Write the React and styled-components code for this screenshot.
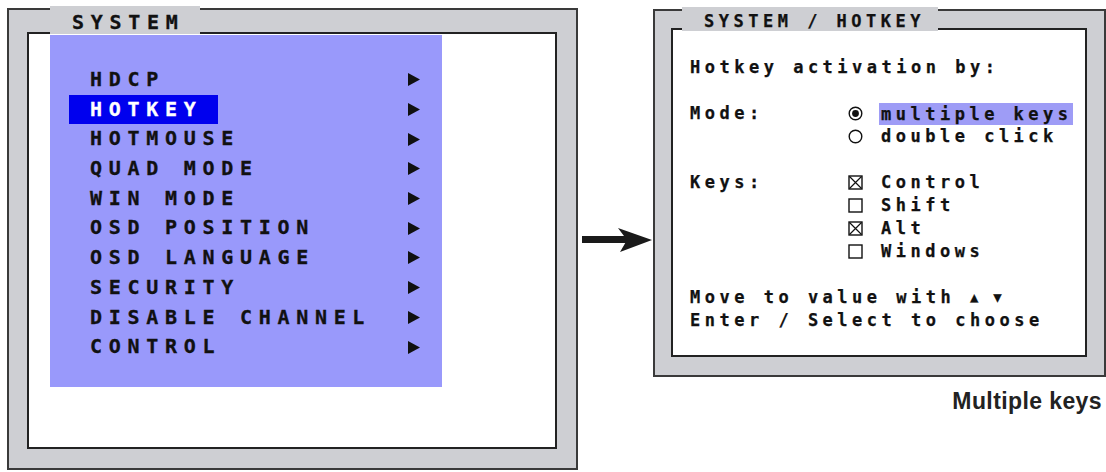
import React from "react";
import styled, { createGlobalStyle } from "styled-components";

const GlobalStyle = createGlobalStyle`
  html, body {
    margin: 0;
    padding: 0;
    background: #ffffff;
    overflow: hidden;
  }
`;

const menuItems = [
  "HDCP",
  "HOTKEY",
  "HOTMOUSE",
  "QUAD MODE",
  "WIN MODE",
  "OSD POSITION",
  "OSD LANGUAGE",
  "SECURITY",
  "DISABLE CHANNEL",
  "CONTROL",
];

const keys = [
  { name: "Control", checked: true },
  { name: "Shift", checked: false },
  { name: "Alt", checked: true },
  { name: "Windows", checked: false },
];

const RadioIcon = ({ on }) => (
  <svg width="15" height="15" viewBox="0 0 15 15">
    <circle cx="7.5" cy="7.5" r="6.3" fill="none" stroke="#111" strokeWidth="1.4" />
    {on && <circle cx="7.5" cy="7.5" r="3.4" fill="#111" />}
  </svg>
);

const CheckIcon = ({ on }) => (
  <svg width="15" height="15" viewBox="0 0 15 15">
    <rect x="1" y="1" width="13" height="13" fill="none" stroke="#111" strokeWidth="1.4" />
    {on && (
      <path d="M1.5 1.5 L13.5 13.5 M13.5 1.5 L1.5 13.5" stroke="#111" strokeWidth="1.2" />
    )}
  </svg>
);

const MenuArrow = () => (
  <svg width="12" height="13" viewBox="0 0 12 13">
    <polygon points="0,0 12,6.5 0,13" fill="#111" />
  </svg>
);

const BigArrow = () => (
  <svg width="70" height="24" viewBox="0 0 70 24">
    <rect x="0" y="8" width="47" height="7" fill="#1a1a1a" />
    <polygon points="36,0 70,12 38,24 45,12" fill="#1a1a1a" />
  </svg>
);

const App = () => {
  return (
    <>
      <GlobalStyle />
      <Page>
        <Frame $w={571} $h={462} $pad="22px 19px 19px 18px">
          <Tab $left={41} $width={150} $height={28} $padLeft={22}>
            <BigTitle>SYSTEM</BigTitle>
          </Tab>
          <Screen $pad="1px 0 0 21px">
            <Menu>
              {menuItems.map((item) => (
                <MenuRow key={item}>
                  <MenuLabel $active={item === "HOTKEY"}>{item}</MenuLabel>
                  <MenuArrow />
                </MenuRow>
              ))}
            </Menu>
          </Screen>
        </Frame>

        <ArrowSlot>
          <BigArrow />
        </ArrowSlot>

        <RightColumn>
          <Frame $w={453} $h={368} $pad="17px 17px 18px 16px">
            <Tab $left={27} $width={256} $height={24} $padLeft={22}>
              <SmallTitle>SYSTEM / HOTKEY</SmallTitle>
            </Tab>
            <Screen $pad="26px 0 0 17px">
              <Dialog>
                <Line>Hotkey activation by:</Line>

                <Group>
                  <Line>Mode:</Line>
                  <Options>
                    <Option>
                      <RadioIcon on />
                      <Picked>multiple keys</Picked>
                    </Option>
                    <Option>
                      <RadioIcon />
                      <span>double click</span>
                    </Option>
                  </Options>
                </Group>

                <Group>
                  <Line>Keys:</Line>
                  <Options>
                    {keys.map((k) => (
                      <Option key={k.name}>
                        <CheckIcon on={k.checked} />
                        <span>{k.name}</span>
                      </Option>
                    ))}
                  </Options>
                </Group>

                <div>
                  <Line>
                    Move to value with <Tri>▲</Tri> <Tri>▼</Tri>
                  </Line>
                  <Line>Enter / Select to choose</Line>
                </div>
              </Dialog>
            </Screen>
          </Frame>
          <Caption>Multiple keys</Caption>
        </RightColumn>
      </Page>
    </>
  );
};

const Page = styled.div`
  display: flex;
  align-items: stretch;
  padding: 8px 0 0 7px;
  width: 1106px;
  height: 472px;
  box-sizing: border-box;
`;

const Frame = styled.div`
  position: relative;
  flex: none;
  display: flex;
  width: ${(p) => p.$w}px;
  height: ${(p) => p.$h}px;
  box-sizing: border-box;
  padding: ${(p) => p.$pad};
  background: #cecfd3;
  border: 2px solid #3a3a3a;
`;

const Tab = styled.div`
  position: absolute;
  top: -4px;
  left: ${(p) => p.$left}px;
  width: ${(p) => p.$width}px;
  height: ${(p) => p.$height}px;
  box-sizing: border-box;
  padding-left: ${(p) => p.$padLeft}px;
  background: #cecfd3;
`;

const mono = `"DejaVu Sans Mono", "Liberation Mono", monospace`;

const BigTitle = styled.div`
  font-family: ${mono};
  font-weight: bold;
  font-size: 20px;
  letter-spacing: 6.7px;
  line-height: 25px;
  padding-top: 4px;
  color: #111;
  -webkit-text-stroke: 0.3px #111;
`;

const SmallTitle = styled.div`
  font-family: ${mono};
  font-weight: bold;
  font-size: 17px;
  letter-spacing: 4.5px;
  line-height: 23px;
  padding-top: 3px;
  color: #111;
  -webkit-text-stroke: 0.25px #111;
`;

const Screen = styled.div`
  flex: 1;
  background: #ffffff;
  border: 2px solid #222;
  padding: ${(p) => p.$pad};
  box-sizing: border-box;
`;

const Menu = styled.div`
  width: 392px;
  height: 352px;
  box-sizing: border-box;
  padding: 30px 22px 0 19px;
  background: #9999fb;
`;

const MenuRow = styled.div`
  display: flex;
  align-items: center;
  justify-content: space-between;
  height: 29.7px;
`;

const MenuLabel = styled.span`
  font-family: ${mono};
  font-weight: bold;
  font-size: 20px;
  letter-spacing: 6.7px;
  line-height: 29.7px;
  padding: 0 16px 0 21px;
  white-space: pre;
  color: ${(p) => (p.$active ? "#ffffff" : "#111")};
  -webkit-text-stroke: 0.3px ${(p) => (p.$active ? "#ffffff" : "#111")};
  background: ${(p) => (p.$active ? "#0000ee" : "transparent")};
`;

const ArrowSlot = styled.div`
  flex: none;
  display: flex;
  align-items: center;
  width: 70px;
  height: 462px;
  margin: 0 1px 0 4px;
  padding-top: 2px;
  box-sizing: border-box;
`;

const RightColumn = styled.div`
  display: flex;
  flex-direction: column;
  align-items: flex-end;
  margin-top: 1px;
`;

const Dialog = styled.div`
  display: flex;
  flex-direction: column;
  gap: 23px;
  font-family: ${mono};
  font-weight: bold;
  font-size: 17px;
  letter-spacing: 4.5px;
  line-height: 23px;
  color: #111;
  -webkit-text-stroke: 0.25px #111;
`;

const Line = styled.div`
  white-space: pre;
`;

const Group = styled.div`
  display: grid;
  grid-template-columns: 158px 1fr;
`;

const Options = styled.div`
  display: flex;
  flex-direction: column;
`;

const Option = styled.div`
  display: flex;
  align-items: center;
  gap: 18px;
  height: 23px;
  white-space: pre;

  svg {
    flex: none;
  }
`;

const Picked = styled.span`
  background: #9e9cf6;
  padding-left: 2px;
  margin-left: -2px;
  line-height: 22px;
`;

const Tri = styled.span`
  font-size: 14px;
  letter-spacing: 0;
  vertical-align: 1px;
`;

const Caption = styled.div`
  margin-top: 11px;
  padding-right: 4px;
  font-family: "Liberation Sans", Arial, sans-serif;
  font-weight: bold;
  font-size: 23px;
  letter-spacing: 0.4px;
  color: #222;
`;

export default App;
